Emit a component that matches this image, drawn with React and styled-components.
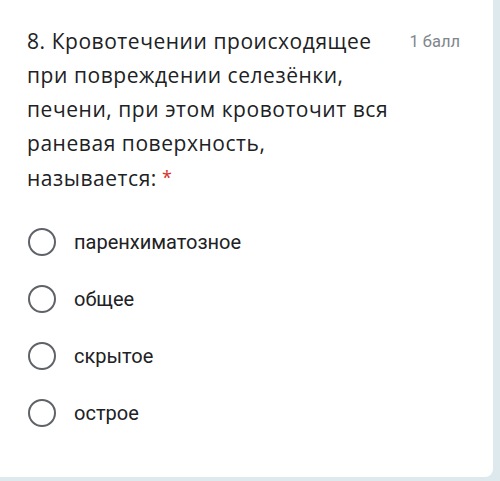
import React from 'react';
import styled, { createGlobalStyle } from 'styled-components';

const GlobalStyle = createGlobalStyle`
  html, body {
    margin: 0;
    padding: 0;
    background: #dde9ed;
  }
`;

const Page = styled.div`
  width: 500px;
  height: 481px;
  overflow: hidden;
  background: #dde9ed;
`;

const Card = styled.div`
  width: 493px;
  height: 477px;
  box-sizing: border-box;
  background: #ffffff;
  border-radius: 0 0 8px 0;
  padding: 24px 0 0 27px;
`;

const Header = styled.div`
  display: flex;
  justify-content: space-between;
  align-items: flex-start;
`;

const Question = styled.div`
  font-family: 'Open Sans', sans-serif;
  font-size: 21px;
  line-height: 34px;
  letter-spacing: 0.55px;
  color: #202124;
  white-space: nowrap;
`;

const Required = styled.span`
  color: #d93025;
  font-size: 18px;
  margin-left: 5px;
  vertical-align: 2px;
`;

const Points = styled.div`
  font-family: Roboto, sans-serif;
  font-size: 16.5px;
  color: #80868b;
  padding-top: 8px;
  margin-right: 33px;
`;

const Options = styled.div`
  display: flex;
  flex-direction: column;
  gap: 29px;
  margin-top: 33px;
`;

const Option = styled.label`
  display: flex;
  align-items: center;
  gap: 18px;
  height: 28px;
  font-family: Roboto, sans-serif;
  font-size: 20px;
  color: #202124;
`;

const Radio = styled.span`
  width: 28px;
  height: 28px;
  box-sizing: border-box;
  border: 2.6px solid #5f6368;
  border-radius: 50%;
  margin-left: 1px;
`;

const options = ['паренхиматозное', 'общее', 'скрытое', 'острое'];

export default function App() {
  return (
    <Page>
      <GlobalStyle />
      <Card>
        <Header>
          <Question>
            8. Кровотечении происходящее
            <br />
            при повреждении селезёнки,
            <br />
            печени, при этом кровоточит вся
            <br />
            раневая поверхность,
            <br />
            называется:
            <Required>*</Required>
          </Question>
          <Points>1 балл</Points>
        </Header>
        <Options>
          {options.map((o) => (
            <Option key={o}>
              <Radio />
              {o}
            </Option>
          ))}
        </Options>
      </Card>
    </Page>
  );
}
